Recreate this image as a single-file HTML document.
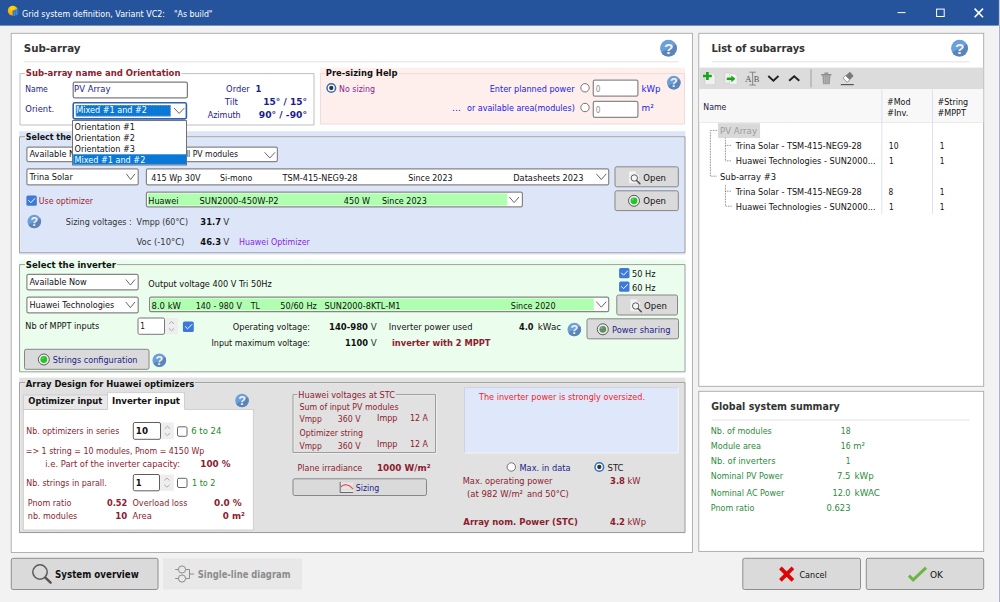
<!DOCTYPE html>
<html lang="en"><head><meta charset="utf-8"><title>Grid system definition, Variant VC2</title>
<style>
html,body{margin:0;padding:0;background:#f2f2f2;overflow:hidden}
body{width:1000px;height:602px}
svg{display:block;font-family:'DejaVu Sans','Liberation Sans',sans-serif}
text{white-space:pre}
</style></head><body>
<svg width="1000" height="602" viewBox="0 0 1000 602">
<rect x="0.00" y="0.00" width="1000.00" height="602.00" fill="#f2f2f2"/>
<rect x="0.00" y="0.00" width="999.00" height="25.60" fill="#25549c"/>
<rect x="998.90" y="0.00" width="1.10" height="602.00" fill="#c4c8d0"/>
<rect x="998.40" y="25.60" width="0.60" height="576.40" fill="#fafafa"/>
<rect x="999.00" y="25.60" width="0.60" height="576.40" fill="#94a4c4"/>
<defs><radialGradient id="sun" cx="0.45" cy="0.25" r="0.8"><stop offset="0" stop-color="#ffe000"/><stop offset="0.6" stop-color="#ffb400"/><stop offset="1" stop-color="#f08a00"/></radialGradient></defs>
<circle cx="12.8" cy="10.8" r="5.0" fill="url(#sun)"/>
<path d="M12.4,10.8 L18.6,8.6 V14.6 L12.9,16.3Z" fill="#2c72c2"/>
<path d="M14.3,10.2 V15.8 M16.3,9.5 V15.2" stroke="#6fb0ea" stroke-width="0.5"/>
<text x="22.00" y="16.50" fill="#fff" font-size="8.6" textLength="143.00" lengthAdjust="spacingAndGlyphs">Grid system definition, Variant VC2:</text>
<text x="174.00" y="16.50" fill="#fff" font-size="8.6" textLength="38.50" lengthAdjust="spacingAndGlyphs">"As build"</text>
<line x1="897.50" y1="12.60" x2="905.50" y2="12.60" stroke="#fff" stroke-width="1.0"/>
<rect x="936.60" y="9.10" width="7.60" height="7.40" fill="none" stroke="#fff" stroke-width="1.0"/>
<path d="M974.6,8.6 L983,17.3 M983,8.6 L974.6,17.3" stroke="#fff" stroke-width="1.6" fill="none"/>
<rect x="11.20" y="33.30" width="681.30" height="519.20" fill="#fff" stroke="#a9a9a9" stroke-width="0.9"/>
<text x="23.80" y="52.00" fill="#333" font-size="10.2" font-weight="bold" textLength="56.70" lengthAdjust="spacingAndGlyphs">Sub-array</text>
<line x1="24.00" y1="61.80" x2="678.80" y2="61.80" stroke="#e2e2e2" stroke-width="1.0"/>
<g><clipPath id="hc1"><circle cx="668.50" cy="48.20" r="8.40"/></clipPath><circle cx="668.50" cy="48.20" r="8.40" fill="#6b9fd9"/><path clip-path="url(#hc1)" d="M659.26,53.41 L677.74,42.99 V58.28 H659.26Z" fill="#5a85b8"/><text x="668.67" y="53.91" text-anchor="middle" font-size="15.54" font-weight="bold" font-family="'Liberation Sans',sans-serif" fill="#f1f1f1">?</text></g>
<path d="M25.00,73.60 H20.00 V125.00 H314.00 V73.60 H181.50" fill="none" stroke="#b4b4b4" stroke-width="0.85"/>
<text x="25.80" y="76.30" fill="#8c1c30" font-size="8.6" font-weight="bold" textLength="154.70" lengthAdjust="spacingAndGlyphs">Sub-array name and Orientation</text>
<text x="25.30" y="92.00" fill="#1c1c8c" font-size="8.6" textLength="22.50" lengthAdjust="spacingAndGlyphs">Name</text>
<rect x="73.20" y="82.20" width="114.20" height="15.70" fill="#fff" stroke="#7c7c7c" stroke-width="1.25" rx="1.6"/>
<text x="74.10" y="92.40" fill="#1c1c8c" font-size="8.6" textLength="36.40" lengthAdjust="spacingAndGlyphs">PV Array</text>
<text x="25.30" y="112.40" fill="#1c1c8c" font-size="8.6" textLength="28.80" lengthAdjust="spacingAndGlyphs">Orient.</text>
<text x="226.10" y="92.00" fill="#1c1c8c" font-size="8.6" textLength="23.60" lengthAdjust="spacingAndGlyphs">Order</text>
<text x="224.80" y="104.80" fill="#1c1c8c" font-size="8.6" textLength="13.20" lengthAdjust="spacingAndGlyphs">Tilt</text>
<text x="207.70" y="117.50" fill="#1c1c8c" font-size="8.6" textLength="33.00" lengthAdjust="spacingAndGlyphs">Azimuth</text>
<text x="255.57" y="92.00" fill="#1c1c8c" font-size="9.2" font-weight="bold" textLength="5.86" lengthAdjust="spacingAndGlyphs">1</text>
<text x="263.30" y="105.00" fill="#1c1c8c" font-size="9.2" font-weight="bold" textLength="43.70" lengthAdjust="spacingAndGlyphs">15° / 15°</text>
<text x="258.80" y="117.50" fill="#1c1c8c" font-size="9.2" font-weight="bold" textLength="48.20" lengthAdjust="spacingAndGlyphs">90° / -90°</text>
<rect x="320.00" y="67.60" width="365.00" height="56.70" fill="#feefed"/>
<path d="M325.00,73.60 H320.40 V124.00 H684.60 V73.60 H398.50" fill="none" stroke="#e6d9d9" stroke-width="0.85"/>
<text x="325.80" y="76.30" fill="#111" font-size="8.6" font-weight="bold" textLength="71.70" lengthAdjust="spacingAndGlyphs">Pre-sizing Help</text>
<circle cx="331.30" cy="88.00" r="4.30" fill="#fff" stroke="#2f6fb5" stroke-width="1.5"/>
<circle cx="331.30" cy="88.00" r="2.15" fill="#333"/>
<text x="339.10" y="92.00" fill="#8a1c8a" font-size="8.6" textLength="36.00" lengthAdjust="spacingAndGlyphs">No sizing</text>
<text x="489.70" y="92.00" fill="#2020f0" font-size="8.6" textLength="84.80" lengthAdjust="spacingAndGlyphs">Enter planned power</text>
<text x="452.10" y="111.20" fill="#2020f0" font-size="8.6" textLength="9.00" lengthAdjust="spacingAndGlyphs">...</text>
<text x="467.00" y="111.20" fill="#2020f0" font-size="8.6" textLength="107.80" lengthAdjust="spacingAndGlyphs">or available area(modules)</text>
<circle cx="585.00" cy="87.80" r="4.20" fill="#fff" stroke="#666" stroke-width="0.9"/>
<circle cx="585.00" cy="107.50" r="4.20" fill="#fff" stroke="#666" stroke-width="0.9"/>
<rect x="593.30" y="80.00" width="44.60" height="16.20" fill="#fff" stroke="#8a8a8a" stroke-width="1.25" rx="1.6"/>
<rect x="593.30" y="101.30" width="44.60" height="16.10" fill="#fff" stroke="#8a8a8a" stroke-width="1.25" rx="1.6"/>
<text x="595.75" y="91.80" fill="#8a8a8a" font-size="8.6" textLength="4.70" lengthAdjust="spacingAndGlyphs">0</text>
<text x="595.75" y="113.00" fill="#8a8a8a" font-size="8.6" textLength="4.70" lengthAdjust="spacingAndGlyphs">0</text>
<text x="641.50" y="92.00" fill="#2020f0" font-size="8.6" textLength="19.00" lengthAdjust="spacingAndGlyphs">kWp</text>
<text x="641.50" y="111.20" fill="#2020f0" font-size="8.6" textLength="12.20" lengthAdjust="spacingAndGlyphs">m²</text>
<g><clipPath id="hc2"><circle cx="673.80" cy="82.60" r="6.80"/></clipPath><circle cx="673.80" cy="82.60" r="6.80" fill="#6b9fd9"/><path clip-path="url(#hc2)" d="M666.32,86.82 L681.28,78.38 V90.76 H666.32Z" fill="#5a85b8"/><text x="673.94" y="87.22" text-anchor="middle" font-size="12.58" font-weight="bold" font-family="'Liberation Sans',sans-serif" fill="#f1f1f1">?</text></g>
<rect x="19.20" y="131.20" width="666.20" height="123.40" fill="#dde6f8"/>
<path d="M25.00,137.60 H20.40 V252.00 M19.60,253.60 H685.80 V136.80 M684.20,137.60 H130.00" fill="none" stroke="#fff" stroke-opacity="0.7" stroke-width="0.8"/>
<path d="M25.00,136.80 H19.60 V252.80 H685.00 V136.80 H130.00" fill="none" stroke="#8f8f8f" stroke-width="0.85"/>
<text x="25.80" y="140.00" fill="#111" font-size="8.6" font-weight="bold" textLength="96.20" lengthAdjust="spacingAndGlyphs">Select the PV module</text>
<rect x="26.90" y="147.10" width="111.30" height="14.60" fill="#fff" stroke="#858585" stroke-width="1.2" rx="1.6"/>
<text x="29.50" y="156.80" fill="#111" font-size="8.6" textLength="57.30" lengthAdjust="spacingAndGlyphs">Available Now</text>
<polyline points="125.80,152.50 130.40,158.00 135.00,152.50" fill="none" stroke="#555" stroke-width="0.9"/>
<rect x="146.40" y="147.10" width="131.00" height="14.60" fill="#fff" stroke="#858585" stroke-width="1.2" rx="1.6"/>
<text x="149.50" y="156.80" fill="#111" font-size="8.6" textLength="19.00" lengthAdjust="spacingAndGlyphs">Filter</text>
<text x="180.70" y="156.80" fill="#111" font-size="8.6" textLength="57.40" lengthAdjust="spacingAndGlyphs">All PV modules</text>
<polyline points="264.60,152.30 269.80,158.00 275.00,152.30" fill="none" stroke="#555" stroke-width="0.9"/>
<rect x="26.90" y="168.90" width="111.30" height="16.00" fill="#fff" stroke="#858585" stroke-width="1.2" rx="1.6"/>
<text x="29.50" y="180.00" fill="#111" font-size="8.6" textLength="43.30" lengthAdjust="spacingAndGlyphs">Trina Solar</text>
<polyline points="126.30,173.80 130.65,179.50 135.00,173.80" fill="none" stroke="#555" stroke-width="0.9"/>
<rect x="146.40" y="168.90" width="462.30" height="16.00" fill="#fff" stroke="#858585" stroke-width="1.2" rx="1.6"/>
<text x="151.30" y="180.60" fill="#111" font-size="8.6" textLength="49.20" lengthAdjust="spacingAndGlyphs">415 Wp 30V</text>
<text x="220.10" y="180.60" fill="#111" font-size="8.6" textLength="32.20" lengthAdjust="spacingAndGlyphs">Si-mono</text>
<text x="282.50" y="180.60" fill="#111" font-size="8.6" textLength="75.00" lengthAdjust="spacingAndGlyphs">TSM-415-NEG9-28</text>
<text x="408.30" y="180.60" fill="#111" font-size="8.6" textLength="44.20" lengthAdjust="spacingAndGlyphs">Since 2023</text>
<text x="513.30" y="180.60" fill="#111" font-size="8.6" textLength="70.20" lengthAdjust="spacingAndGlyphs">Datasheets 2023</text>
<polyline points="596.30,173.80 601.30,179.50 606.30,173.80" fill="none" stroke="#555" stroke-width="0.9"/>
<rect x="615.00" y="166.80" width="63.30" height="20.00" fill="#dadada" stroke="#868686" stroke-width="1.0" rx="1.8"/>
<g transform="translate(628.60,171.60)"><path d="M0,-0.6 H7.2 L10.4,2.6 V11.8 H0Z" fill="#f3f3f3" stroke="#d0d0d0" stroke-width="0.4"/><path d="M7.2,-0.6 V2.6 H10.4Z" fill="#d8d8d8"/><circle cx="5.7" cy="6.4" r="3.2" fill="#fff" fill-opacity="0.35" stroke="#4a4a4a" stroke-width="0.9"/><line x1="8" y1="8.9" x2="11.3" y2="12.2" stroke="#4a4a4a" stroke-width="1.5" stroke-linecap="round"/></g>
<text x="643.30" y="180.80" fill="#111" font-size="8.6" textLength="22.70" lengthAdjust="spacingAndGlyphs">Open</text>
<rect x="26.40" y="195.40" width="10.40" height="10.40" fill="#3c79d9" rx="1.6"/>
<polyline points="28.48,200.29 30.87,202.68 35.14,198.21" fill="none" stroke="#fff" stroke-width="1.0"/>
<text x="38.80" y="203.80" fill="#a01c30" font-size="8.6" textLength="54.20" lengthAdjust="spacingAndGlyphs">Use optimizer</text>
<rect x="146.40" y="192.10" width="376.00" height="14.80" fill="#fff" stroke="#858585" stroke-width="1.2" rx="1.6"/>
<rect x="147.90" y="193.40" width="359.30" height="12.20" fill="#b0ffb0"/>
<text x="148.30" y="203.80" fill="#111" font-size="8.6" textLength="30.20" lengthAdjust="spacingAndGlyphs">Huawei</text>
<text x="199.50" y="203.80" fill="#111" font-size="8.6" textLength="79.00" lengthAdjust="spacingAndGlyphs">SUN2000-450W-P2</text>
<text x="343.80" y="203.80" fill="#111" font-size="8.6" textLength="26.20" lengthAdjust="spacingAndGlyphs">450 W</text>
<text x="382.00" y="203.80" fill="#111" font-size="8.6" textLength="44.80" lengthAdjust="spacingAndGlyphs">Since 2023</text>
<polyline points="509.30,197.00 514.15,202.60 519.00,197.00" fill="none" stroke="#555" stroke-width="0.9"/>
<rect x="615.00" y="190.80" width="63.30" height="19.80" fill="#dadada" stroke="#868686" stroke-width="1.0" rx="1.8"/>
<circle cx="634.00" cy="200.80" r="5.50" fill="#ededed" stroke="#4a4a4a" stroke-width="0.9"/>
<circle cx="634.00" cy="200.80" r="3.41" fill="#25c425"/>
<circle cx="632.90" cy="199.43" r="1.10" fill="#fff" fill-opacity="0.25"/>
<text x="643.30" y="204.30" fill="#111" font-size="8.6" textLength="22.70" lengthAdjust="spacingAndGlyphs">Open</text>
<g><clipPath id="hc3"><circle cx="34.30" cy="221.50" r="6.80"/></clipPath><circle cx="34.30" cy="221.50" r="6.80" fill="#6b9fd9"/><path clip-path="url(#hc3)" d="M26.82,225.72 L41.78,217.28 V229.66 H26.82Z" fill="#5a85b8"/><text x="34.44" y="226.12" text-anchor="middle" font-size="12.58" font-weight="bold" font-family="'Liberation Sans',sans-serif" fill="#f1f1f1">?</text></g>
<text x="65.80" y="225.00" fill="#333" font-size="8.6" textLength="66.00" lengthAdjust="spacingAndGlyphs">Sizing voltages :</text>
<text x="136.50" y="225.00" fill="#333" font-size="8.6" textLength="51.50" lengthAdjust="spacingAndGlyphs">Vmpp (60°C)</text>
<text x="200.30" y="225.00" fill="#111" font-size="9.2" font-weight="bold" textLength="20.70" lengthAdjust="spacingAndGlyphs">31.7</text>
<text x="223.30" y="225.00" fill="#333" font-size="8.6" textLength="6.00" lengthAdjust="spacingAndGlyphs">V</text>
<text x="136.50" y="245.00" fill="#333" font-size="8.6" textLength="47.80" lengthAdjust="spacingAndGlyphs">Voc (-10°C)</text>
<text x="200.30" y="245.00" fill="#111" font-size="9.2" font-weight="bold" textLength="20.70" lengthAdjust="spacingAndGlyphs">46.3</text>
<text x="223.30" y="245.00" fill="#333" font-size="8.6" textLength="6.00" lengthAdjust="spacingAndGlyphs">V</text>
<text x="239.00" y="245.00" fill="#8c1ce6" font-size="8.6" textLength="70.80" lengthAdjust="spacingAndGlyphs">Huawei Optimizer</text>
<rect x="19.20" y="259.60" width="666.20" height="113.80" fill="#ebfded"/>
<path d="M25.00,265.40 H20.40 V371.00 M19.60,372.60 H685.80 V264.60 M684.20,265.40 H117.00" fill="none" stroke="#fff" stroke-opacity="0.7" stroke-width="0.8"/>
<path d="M25.00,264.60 H19.60 V371.80 H685.00 V264.60 H117.00" fill="none" stroke="#8f8f8f" stroke-width="0.85"/>
<text x="25.80" y="268.20" fill="#111" font-size="8.6" font-weight="bold" textLength="90.20" lengthAdjust="spacingAndGlyphs">Select the inverter</text>
<rect x="26.90" y="274.40" width="111.30" height="15.50" fill="#fff" stroke="#858585" stroke-width="1.2" rx="1.6"/>
<text x="29.50" y="285.00" fill="#111" font-size="8.6" textLength="57.30" lengthAdjust="spacingAndGlyphs">Available Now</text>
<polyline points="125.80,279.50 130.40,285.00 135.00,279.50" fill="none" stroke="#555" stroke-width="0.9"/>
<text x="148.30" y="286.80" fill="#111" font-size="8.6" textLength="123.50" lengthAdjust="spacingAndGlyphs">Output voltage 400 V Tri 50Hz</text>
<rect x="26.90" y="297.10" width="111.30" height="15.80" fill="#fff" stroke="#858585" stroke-width="1.2" rx="1.6"/>
<text x="29.50" y="308.00" fill="#111" font-size="8.6" textLength="84.80" lengthAdjust="spacingAndGlyphs">Huawei Technologies</text>
<polyline points="125.80,302.00 130.40,307.60 135.00,302.00" fill="none" stroke="#555" stroke-width="0.9"/>
<rect x="149.60" y="297.10" width="459.10" height="14.60" fill="#fff" stroke="#858585" stroke-width="1.2" rx="1.6"/>
<rect x="151.10" y="298.40" width="442.70" height="12.00" fill="#b0ffb0"/>
<text x="151.50" y="308.80" fill="#111" font-size="8.6" textLength="29.50" lengthAdjust="spacingAndGlyphs">8.0 kW</text>
<text x="195.80" y="308.80" fill="#111" font-size="8.6" textLength="46.00" lengthAdjust="spacingAndGlyphs">140 - 980 V</text>
<text x="250.80" y="308.80" fill="#111" font-size="8.6" textLength="9.20" lengthAdjust="spacingAndGlyphs">TL</text>
<text x="280.30" y="308.80" fill="#111" font-size="8.6" textLength="36.50" lengthAdjust="spacingAndGlyphs">50/60 Hz</text>
<text x="324.50" y="308.80" fill="#111" font-size="8.6" textLength="76.00" lengthAdjust="spacingAndGlyphs">SUN2000-8KTL-M1</text>
<text x="510.80" y="308.80" fill="#111" font-size="8.6" textLength="44.70" lengthAdjust="spacingAndGlyphs">Since 2020</text>
<polyline points="596.30,301.60 601.30,307.20 606.30,301.60" fill="none" stroke="#555" stroke-width="0.9"/>
<rect x="619.10" y="267.90" width="10.40" height="10.40" fill="#3c79d9" rx="1.6"/>
<polyline points="621.18,272.79 623.57,275.18 627.84,270.71" fill="none" stroke="#fff" stroke-width="1.0"/>
<rect x="619.10" y="281.40" width="10.40" height="10.40" fill="#3c79d9" rx="1.6"/>
<polyline points="621.18,286.29 623.57,288.68 627.84,284.21" fill="none" stroke="#fff" stroke-width="1.0"/>
<text x="632.00" y="276.80" fill="#111" font-size="8.6" textLength="23.50" lengthAdjust="spacingAndGlyphs">50 Hz</text>
<text x="632.00" y="290.50" fill="#111" font-size="8.6" textLength="23.50" lengthAdjust="spacingAndGlyphs">60 Hz</text>
<rect x="616.80" y="295.00" width="60.70" height="20.00" fill="#dadada" stroke="#868686" stroke-width="1.0" rx="1.8"/>
<g transform="translate(630.00,299.60)"><path d="M0,-0.6 H7.2 L10.4,2.6 V11.8 H0Z" fill="#f3f3f3" stroke="#d0d0d0" stroke-width="0.4"/><path d="M7.2,-0.6 V2.6 H10.4Z" fill="#d8d8d8"/><circle cx="5.7" cy="6.4" r="3.2" fill="#fff" fill-opacity="0.35" stroke="#4a4a4a" stroke-width="0.9"/><line x1="8" y1="8.9" x2="11.3" y2="12.2" stroke="#4a4a4a" stroke-width="1.5" stroke-linecap="round"/></g>
<text x="644.00" y="308.80" fill="#111" font-size="8.6" textLength="22.80" lengthAdjust="spacingAndGlyphs">Open</text>
<text x="25.30" y="328.80" fill="#111" font-size="8.6" textLength="74.00" lengthAdjust="spacingAndGlyphs">Nb of MPPT inputs</text>
<rect x="165.00" y="318.00" width="13.00" height="16.30" fill="#eeeeee"/>
<rect x="138.00" y="318.00" width="26.50" height="16.30" fill="#fff" stroke="#777" stroke-width="1.0" rx="1.5"/>
<polyline points="168.90,323.95 171.50,321.55 174.10,323.95" fill="none" stroke="#999" stroke-width="0.8"/>
<polyline points="168.90,328.35 171.50,330.75 174.10,328.35" fill="none" stroke="#999" stroke-width="0.8"/>
<text x="140.15" y="329.40" fill="#111" font-size="8.6" textLength="4.70" lengthAdjust="spacingAndGlyphs">1</text>
<rect x="182.90" y="321.40" width="10.90" height="10.60" fill="#3c79d9" rx="1.6"/>
<polyline points="185.08,326.38 187.59,328.82 192.06,324.26" fill="none" stroke="#fff" stroke-width="1.0"/>
<text x="232.80" y="329.50" fill="#111" font-size="8.6" textLength="77.20" lengthAdjust="spacingAndGlyphs">Operating voltage:</text>
<text x="211.50" y="346.30" fill="#111" font-size="8.6" textLength="98.50" lengthAdjust="spacingAndGlyphs">Input maximum voltage:</text>
<text x="329.00" y="329.50" fill="#111" font-size="9.2" font-weight="bold" textLength="39.00" lengthAdjust="spacingAndGlyphs">140-980</text>
<text x="370.80" y="329.50" fill="#333" font-size="8.6" textLength="6.00" lengthAdjust="spacingAndGlyphs">V</text>
<text x="345.00" y="346.30" fill="#111" font-size="9.2" font-weight="bold" textLength="23.00" lengthAdjust="spacingAndGlyphs">1100</text>
<text x="370.80" y="346.30" fill="#333" font-size="8.6" textLength="6.00" lengthAdjust="spacingAndGlyphs">V</text>
<text x="388.80" y="329.50" fill="#111" font-size="8.6" textLength="83.70" lengthAdjust="spacingAndGlyphs">Inverter power used</text>
<text x="392.00" y="346.30" fill="#8c1c30" font-size="9.2" font-weight="bold" textLength="98.50" lengthAdjust="spacingAndGlyphs">inverter with 2 MPPT</text>
<text x="519.00" y="329.50" fill="#111" font-size="9.2" font-weight="bold" textLength="14.50" lengthAdjust="spacingAndGlyphs">4.0</text>
<text x="537.80" y="329.50" fill="#111" font-size="8.6" textLength="23.20" lengthAdjust="spacingAndGlyphs">kWac</text>
<g><clipPath id="hc4"><circle cx="574.30" cy="329.50" r="6.80"/></clipPath><circle cx="574.30" cy="329.50" r="6.80" fill="#6b9fd9"/><path clip-path="url(#hc4)" d="M566.82,333.72 L581.78,325.28 V337.66 H566.82Z" fill="#5a85b8"/><text x="574.44" y="334.12" text-anchor="middle" font-size="12.58" font-weight="bold" font-family="'Liberation Sans',sans-serif" fill="#f1f1f1">?</text></g>
<rect x="587.00" y="318.80" width="91.50" height="20.00" fill="#dadada" stroke="#868686" stroke-width="1.0" rx="1.8"/>
<circle cx="602.80" cy="329.30" r="5.50" fill="#ededed" stroke="#4a4a4a" stroke-width="0.9"/>
<circle cx="602.80" cy="329.30" r="3.41" fill="#5f8f5f"/>
<circle cx="601.70" cy="327.93" r="1.10" fill="#fff" fill-opacity="0.25"/>
<text x="612.00" y="332.50" fill="#1c1c8c" font-size="8.6" textLength="58.50" lengthAdjust="spacingAndGlyphs">Power sharing</text>
<rect x="24.50" y="349.30" width="124.50" height="20.00" fill="#dadada" stroke="#868686" stroke-width="1.0" rx="1.8"/>
<circle cx="43.80" cy="359.50" r="5.50" fill="#ededed" stroke="#4a4a4a" stroke-width="0.9"/>
<circle cx="43.80" cy="359.50" r="3.41" fill="#25c425"/>
<circle cx="42.70" cy="358.12" r="1.10" fill="#fff" fill-opacity="0.25"/>
<text x="52.80" y="362.50" fill="#1c1c8c" font-size="8.6" textLength="84.70" lengthAdjust="spacingAndGlyphs">Strings configuration</text>
<g><clipPath id="hc5"><circle cx="159.30" cy="360.30" r="6.80"/></clipPath><circle cx="159.30" cy="360.30" r="6.80" fill="#6b9fd9"/><path clip-path="url(#hc5)" d="M151.82,364.52 L166.78,356.08 V368.46 H151.82Z" fill="#5a85b8"/><text x="159.44" y="364.92" text-anchor="middle" font-size="12.58" font-weight="bold" font-family="'Liberation Sans',sans-serif" fill="#f1f1f1">?</text></g>
<rect x="19.20" y="377.60" width="666.20" height="155.80" fill="#e1e1e1"/>
<path d="M25.00,383.40 H20.40 V531.70 M19.60,533.30 H685.80 V382.60 M684.20,383.40 H195.00" fill="none" stroke="#fff" stroke-opacity="0.7" stroke-width="0.8"/>
<path d="M25.00,382.60 H19.60 V532.50 H685.00 V382.60 H195.00" fill="none" stroke="#8f8f8f" stroke-width="0.85"/>
<text x="25.80" y="386.80" fill="#111" font-size="8.6" font-weight="bold" textLength="168.50" lengthAdjust="spacingAndGlyphs">Array Design for Huawei optimizers</text>
<rect x="23.30" y="409.40" width="230.00" height="120.60" fill="#fff" stroke="#c8c8c8" stroke-width="0.8"/>
<rect x="23.30" y="395.00" width="84.20" height="14.40" fill="#e9e9e9" stroke="#c8c8c8" stroke-width="0.8"/>
<rect x="107.50" y="392.60" width="77.00" height="17.60" fill="#fff"/>
<path d="M107.5,409.4 V392.6 H184.5 V409.4" fill="none" stroke="#c8c8c8" stroke-width="0.8"/>
<text x="28.30" y="404.30" fill="#111" font-size="9.2" font-weight="bold" textLength="74.00" lengthAdjust="spacingAndGlyphs">Optimizer input</text>
<text x="112.00" y="403.80" fill="#111" font-size="9.2" font-weight="bold" textLength="68.00" lengthAdjust="spacingAndGlyphs">Inverter input</text>
<g><clipPath id="hc6"><circle cx="242.00" cy="400.50" r="6.80"/></clipPath><circle cx="242.00" cy="400.50" r="6.80" fill="#6b9fd9"/><path clip-path="url(#hc6)" d="M234.52,404.72 L249.48,396.28 V408.66 H234.52Z" fill="#5a85b8"/><text x="242.14" y="405.12" text-anchor="middle" font-size="12.58" font-weight="bold" font-family="'Liberation Sans',sans-serif" fill="#f1f1f1">?</text></g>
<text x="26.30" y="434.30" fill="#8c1c30" font-size="8.6" textLength="93.00" lengthAdjust="spacingAndGlyphs">Nb. optimizers in series</text>
<rect x="161.00" y="422.50" width="12.80" height="16.80" fill="#eeeeee"/>
<rect x="133.30" y="422.50" width="27.20" height="16.80" fill="#fff" stroke="#5e5e5e" stroke-width="1.0" rx="1.5"/>
<polyline points="164.80,428.70 167.40,426.30 170.00,428.70" fill="none" stroke="#999" stroke-width="0.8"/>
<polyline points="164.80,433.10 167.40,435.50 170.00,433.10" fill="none" stroke="#999" stroke-width="0.8"/>
<text x="135.80" y="433.80" fill="#111" font-size="9.2" font-weight="bold" textLength="12.20" lengthAdjust="spacingAndGlyphs">10</text>
<rect x="177.50" y="426.80" width="9.50" height="9.50" fill="#fff" stroke="#555" stroke-width="0.9" rx="1.5"/>
<text x="191.30" y="434.30" fill="#228b22" font-size="8.6" textLength="30.00" lengthAdjust="spacingAndGlyphs">6 to 24</text>
<text x="25.80" y="454.30" fill="#8c1c30" font-size="8.6" textLength="178.50" lengthAdjust="spacingAndGlyphs">=&gt; 1 string = 10 modules, Pnom = 4150 Wp</text>
<text x="45.30" y="466.80" fill="#8c1c30" font-size="8.6" textLength="134.70" lengthAdjust="spacingAndGlyphs">i.e. Part of the inverter capacity:</text>
<text x="200.30" y="466.80" fill="#8c1c30" font-size="9.2" font-weight="bold" textLength="30.20" lengthAdjust="spacingAndGlyphs">100 %</text>
<text x="26.30" y="485.80" fill="#8c1c30" font-size="8.6" textLength="80.50" lengthAdjust="spacingAndGlyphs">Nb. strings in parall.</text>
<rect x="160.00" y="474.50" width="13.80" height="16.30" fill="#eeeeee"/>
<rect x="133.30" y="474.50" width="26.20" height="16.30" fill="#fff" stroke="#5e5e5e" stroke-width="1.0" rx="1.5"/>
<polyline points="164.30,480.45 166.90,478.05 169.50,480.45" fill="none" stroke="#999" stroke-width="0.8"/>
<polyline points="164.30,484.85 166.90,487.25 169.50,484.85" fill="none" stroke="#999" stroke-width="0.8"/>
<text x="135.67" y="485.80" fill="#111" font-size="9.2" font-weight="bold" textLength="5.86" lengthAdjust="spacingAndGlyphs">1</text>
<rect x="177.50" y="478.30" width="9.50" height="9.20" fill="#fff" stroke="#555" stroke-width="0.9" rx="1.5"/>
<text x="192.00" y="485.80" fill="#228b22" font-size="8.6" textLength="23.50" lengthAdjust="spacingAndGlyphs">1 to 2</text>
<text x="27.80" y="505.50" fill="#8c1c30" font-size="8.6" textLength="43.50" lengthAdjust="spacingAndGlyphs">Pnom ratio</text>
<text x="107.00" y="505.50" fill="#8c1c30" font-size="9.2" font-weight="bold" textLength="20.30" lengthAdjust="spacingAndGlyphs">0.52</text>
<text x="132.50" y="505.50" fill="#8c1c30" font-size="8.6" textLength="55.00" lengthAdjust="spacingAndGlyphs">Overload loss</text>
<text x="214.00" y="505.50" fill="#8c1c30" font-size="9.2" font-weight="bold" textLength="27.80" lengthAdjust="spacingAndGlyphs">0.0 %</text>
<text x="27.80" y="518.80" fill="#8c1c30" font-size="8.6" textLength="49.50" lengthAdjust="spacingAndGlyphs">nb. modules</text>
<text x="115.30" y="518.80" fill="#8c1c30" font-size="9.2" font-weight="bold" textLength="12.00" lengthAdjust="spacingAndGlyphs">10</text>
<text x="132.50" y="518.80" fill="#8c1c30" font-size="8.6" textLength="19.30" lengthAdjust="spacingAndGlyphs">Area</text>
<text x="222.80" y="518.80" fill="#8c1c30" font-size="9.2" font-weight="bold" textLength="22.00" lengthAdjust="spacingAndGlyphs">0 m²</text>
<path d="M297.50,395.40 H293.80 V451.70 M293.00,453.30 H436.30 V394.60 M434.70,395.40 H396.00" fill="none" stroke="#fff" stroke-opacity="0.7" stroke-width="0.8"/>
<path d="M297.50,394.60 H293.00 V452.50 H435.50 V394.60 H396.00" fill="none" stroke="#8f8f8f" stroke-width="0.85"/>
<text x="298.30" y="397.50" fill="#8c1c30" font-size="8.6" textLength="96.70" lengthAdjust="spacingAndGlyphs">Huawei voltages at STC</text>
<text x="299.50" y="409.50" fill="#8c1c30" font-size="8.6" textLength="99.00" lengthAdjust="spacingAndGlyphs">Sum of input PV modules</text>
<text x="299.50" y="421.80" fill="#8c1c30" font-size="8.6" textLength="22.30" lengthAdjust="spacingAndGlyphs">Vmpp</text>
<text x="337.80" y="421.80" fill="#8c1c30" font-size="8.6" textLength="22.70" lengthAdjust="spacingAndGlyphs">360 V</text>
<text x="377.00" y="421.40" fill="#8c1c30" font-size="8.6" textLength="20.50" lengthAdjust="spacingAndGlyphs">Impp</text>
<text x="410.00" y="421.40" fill="#8c1c30" font-size="8.6" textLength="18.00" lengthAdjust="spacingAndGlyphs">12 A</text>
<text x="299.50" y="436.30" fill="#8c1c30" font-size="8.6" textLength="63.50" lengthAdjust="spacingAndGlyphs">Optimizer string</text>
<text x="299.50" y="448.80" fill="#8c1c30" font-size="8.6" textLength="22.30" lengthAdjust="spacingAndGlyphs">Vmpp</text>
<text x="337.80" y="448.80" fill="#8c1c30" font-size="8.6" textLength="22.70" lengthAdjust="spacingAndGlyphs">360 V</text>
<text x="377.00" y="447.20" fill="#8c1c30" font-size="8.6" textLength="20.50" lengthAdjust="spacingAndGlyphs">Impp</text>
<text x="410.00" y="447.20" fill="#8c1c30" font-size="8.6" textLength="18.00" lengthAdjust="spacingAndGlyphs">12 A</text>
<text x="297.50" y="470.50" fill="#8c1c30" font-size="8.6" textLength="64.80" lengthAdjust="spacingAndGlyphs">Plane irradiance</text>
<text x="377.00" y="470.50" fill="#8c1c30" font-size="9.2" font-weight="bold" textLength="53.50" lengthAdjust="spacingAndGlyphs">1000 W/m²</text>
<rect x="293.00" y="478.80" width="133.50" height="16.70" fill="#dadada" stroke="#868686" stroke-width="1.0" rx="1.8"/>
<g><rect x="340.2" y="482" width="12.9" height="10.5" fill="#e6e6e6"/><path d="M340.2,482 H353.1 M340.2,486 H353.1 M340.2,489.6 H353.1" stroke="#cfcfcf" stroke-width="0.5"/><path d="M340.2,482 V492.5 H353.1" fill="none" stroke="#4a4a4a" stroke-width="0.8"/><path d="M340.5,487.1 Q346.4,481.4 353,488.9" fill="none" stroke="#e84c4c" stroke-width="1.1"/></g>
<text x="355.80" y="491.30" fill="#1c1c8c" font-size="8.6" textLength="23.50" lengthAdjust="spacingAndGlyphs">Sizing</text>
<rect x="464.50" y="387.60" width="213.80" height="65.40" fill="#dfe8fb"/>
<path d="M464.5,453 V387.6 H678.3" fill="none" stroke="#c9cedb" stroke-width="0.8"/>
<path d="M464.5,453 H678.3 V387.6" fill="none" stroke="#f8f8f8" stroke-width="0.8"/>
<text x="479.00" y="399.50" fill="#ee1c28" font-size="8.6" textLength="166.00" lengthAdjust="spacingAndGlyphs">The inverter power is strongly oversized.</text>
<circle cx="511.30" cy="467.00" r="4.20" fill="#fff" stroke="#666" stroke-width="0.9"/>
<text x="519.50" y="470.50" fill="#1c1c8c" font-size="8.6" textLength="51.00" lengthAdjust="spacingAndGlyphs">Max. in data</text>
<circle cx="599.30" cy="467.00" r="4.30" fill="#fff" stroke="#2f6fb5" stroke-width="1.5"/>
<circle cx="599.30" cy="467.00" r="2.15" fill="#333"/>
<text x="607.50" y="470.50" fill="#222" font-size="8.6" textLength="16.00" lengthAdjust="spacingAndGlyphs">STC</text>
<text x="462.80" y="483.80" fill="#8c1c30" font-size="8.6" textLength="89.70" lengthAdjust="spacingAndGlyphs">Max. operating power</text>
<text x="610.00" y="483.80" fill="#8c1c30" font-size="9.2" font-weight="bold" textLength="15.00" lengthAdjust="spacingAndGlyphs">3.8</text>
<text x="627.50" y="483.80" fill="#8c1c30" font-size="8.6" textLength="13.00" lengthAdjust="spacingAndGlyphs">kW</text>
<text x="467.00" y="497.00" fill="#8c1c30" font-size="8.6" textLength="56.00" lengthAdjust="spacingAndGlyphs">(at 982 W/m²</text>
<text x="527.00" y="497.00" fill="#8c1c30" font-size="8.6" textLength="41.80" lengthAdjust="spacingAndGlyphs">and 50°C)</text>
<text x="463.30" y="525.00" fill="#8c1c30" font-size="9.2" font-weight="bold" textLength="114.70" lengthAdjust="spacingAndGlyphs">Array nom. Power (STC)</text>
<text x="610.00" y="525.00" fill="#8c1c30" font-size="9.2" font-weight="bold" textLength="15.00" lengthAdjust="spacingAndGlyphs">4.2</text>
<text x="627.50" y="525.00" fill="#8c1c30" font-size="8.6" textLength="18.50" lengthAdjust="spacingAndGlyphs">kWp</text>
<rect x="11.30" y="558.30" width="146.70" height="31.20" fill="#dadada" stroke="#8e8e8e" stroke-width="1.0" rx="1.8"/>
<g><circle cx="40" cy="572" r="7.2" fill="none" stroke="#5a5a5a" stroke-width="1.5"/><line x1="45.6" y1="577.8" x2="50.6" y2="582.6" stroke="#555" stroke-width="2.5" stroke-linecap="round"/></g>
<text x="55.00" y="577.80" fill="#111" font-size="9.6" font-weight="bold" textLength="83.80" lengthAdjust="spacingAndGlyphs">System overview</text>
<rect x="163.00" y="558.30" width="139.00" height="31.20" fill="#e8e8e8"/>
<g fill="none" stroke="#8c8c8c" stroke-width="1.0"><circle cx="182" cy="569.5" r="3.6"/><circle cx="182" cy="578.5" r="3.6"/><path d="M175.2,569.5 H178.4 M175.2,578.5 H178.4 M185.6,569.5 H189.5 V578.5 H185.6 M189.5,574 H194"/></g>
<text x="197.80" y="577.80" fill="#8c8c8c" font-size="9.6" font-weight="bold" textLength="92.70" lengthAdjust="spacingAndGlyphs">Single-line diagram</text>
<rect x="698.80" y="33.30" width="284.90" height="353.00" fill="#fff" stroke="#a9a9a9" stroke-width="0.9"/>
<text x="711.50" y="52.00" fill="#333" font-size="10.2" font-weight="bold" textLength="93.50" lengthAdjust="spacingAndGlyphs">List of subarrays</text>
<line x1="712.00" y1="61.80" x2="969.50" y2="61.80" stroke="#e2e2e2" stroke-width="1.0"/>
<g><clipPath id="hc7"><circle cx="959.50" cy="48.20" r="8.40"/></clipPath><circle cx="959.50" cy="48.20" r="8.40" fill="#6b9fd9"/><path clip-path="url(#hc7)" d="M950.26,53.41 L968.74,42.99 V58.28 H950.26Z" fill="#5a85b8"/><text x="959.67" y="53.91" text-anchor="middle" font-size="15.54" font-weight="bold" font-family="'Liberation Sans',sans-serif" fill="#f1f1f1">?</text></g>
<rect x="699.30" y="67.60" width="284.00" height="21.70" fill="#dcdcdc"/>
<g><path d="M704.8,72.8 H712.2 L715.2,75.8 V84.8 H704.8Z" fill="#f0f0f0" stroke="#c4c4c4" stroke-width="0.5"/><path d="M707.4,71.9 V80.1 M703,76 H711.8" stroke="#18a518" stroke-width="2.7"/></g>
<g><path d="M724.8,72.8 H730 L732.4,75.2 V83.2 H724.8Z" fill="#f0f0f0" stroke="#c4c4c4" stroke-width="0.5"/><path d="M729.6,73.6 H734.4 L737.2,76.4 V84.4 H729.6Z" fill="#f4f4f4" stroke="#c4c4c4" stroke-width="0.5"/><path d="M726.8,78.8 H732.2" stroke="#18a518" stroke-width="2.5"/><path d="M731.4,75.4 L735.4,78.8 L731.4,82.2Z" fill="#18a518"/></g>
<text x="745" y="81.7" font-family="'Liberation Serif','DejaVu Serif',serif" font-size="9.2" fill="#555" textLength="6.6" lengthAdjust="spacingAndGlyphs">A</text>
<text x="753.7" y="81.7" font-family="'Liberation Serif','DejaVu Serif',serif" font-size="9.2" fill="#555" textLength="5.6" lengthAdjust="spacingAndGlyphs">B</text>
<path d="M752.6,72.2 V85 M749.4,72.2 H755.8 M749.4,85 H755.8" stroke="#666" stroke-width="0.7" fill="none"/>
<polyline points="768.3,76 773.4,80.6 778.5,76" fill="none" stroke="#222" stroke-width="1.9"/>
<polyline points="789.1,80.8 794.2,76.2 799.3,80.8" fill="none" stroke="#222" stroke-width="1.9"/>
<line x1="811.00" y1="69.20" x2="811.00" y2="87.60" stroke="#a6a6a6" stroke-width="1.1"/>
<g><rect x="821.2" y="74" width="10.2" height="1.6" fill="#8a8a8a"/><rect x="824.4" y="72.4" width="4" height="1.8" fill="#9a9a9a"/><path d="M822.4,75.6 H830.4 L829.8,84.2 H823Z" fill="#9a9a9a"/><path d="M824.6,76.4 V83.4 M826.4,76.4 V83.4 M828.2,76.4 V83.4" stroke="#c4c4c4" stroke-width="0.6"/></g>
<g><path d="M850,71.8 L853.6,76 L847.2,82.4 L842.8,78Z" fill="#7a7a7a"/><path d="M845.5,75.5 L849.7,79.8 L847.2,82.3 L842.9,78Z" fill="#fff" stroke="#7a7a7a" stroke-width="0.6"/><path d="M840.8,84.6 H853.8" stroke="#555" stroke-width="1.2"/></g>
<rect x="699.30" y="89.30" width="284.00" height="33.20" fill="#f8f8f8"/>
<line x1="699.30" y1="122.50" x2="983.30" y2="122.50" stroke="#e6e6e6" stroke-width="0.8"/>
<text x="703.30" y="110.00" fill="#1a1a40" font-size="8.6" textLength="23.00" lengthAdjust="spacingAndGlyphs">Name</text>
<text x="887.00" y="104.50" fill="#111" font-size="8.6" textLength="23.50" lengthAdjust="spacingAndGlyphs">#Mod</text>
<text x="887.00" y="115.80" fill="#111" font-size="8.6" textLength="21.50" lengthAdjust="spacingAndGlyphs">#Inv.</text>
<text x="937.50" y="104.50" fill="#111" font-size="8.6" textLength="30.60" lengthAdjust="spacingAndGlyphs">#String</text>
<text x="937.50" y="115.80" fill="#111" font-size="8.6" textLength="28.40" lengthAdjust="spacingAndGlyphs">#MPPT</text>
<line x1="881.80" y1="89.30" x2="881.80" y2="214.30" stroke="#d3dbee" stroke-width="0.8"/>
<line x1="932.50" y1="89.30" x2="932.50" y2="214.30" stroke="#d3dbee" stroke-width="0.8"/>
<rect x="718.00" y="123.20" width="42.00" height="14.80" fill="#d9d9d9"/>
<text x="720.00" y="133.80" fill="#9c9c9c" font-size="8.6" textLength="37.00" lengthAdjust="spacingAndGlyphs">PV Array</text>
<path d="M717,130.4 H710.4 V176.2 H716.8" fill="none" stroke="#5a5a5a" stroke-width="0.8" stroke-dasharray="0.8,0.8"/>
<path d="M725.4,138.4 V160.8 H731.8 M725.4,145.4 H731.8" fill="none" stroke="#5a5a5a" stroke-width="0.8" stroke-dasharray="0.8,0.8"/>
<path d="M725.4,184.8 V206.2 H731.8 M725.4,191.2 H731.8" fill="none" stroke="#5a5a5a" stroke-width="0.8" stroke-dasharray="0.8,0.8"/>
<text x="735.80" y="149.00" fill="#111" font-size="8.6" textLength="126.00" lengthAdjust="spacingAndGlyphs">Trina Solar - TSM-415-NEG9-28</text>
<text x="735.80" y="164.30" fill="#111" font-size="8.6" textLength="139.70" lengthAdjust="spacingAndGlyphs">Huawei Technologies - SUN2000...</text>
<text x="720.00" y="179.60" fill="#111" font-size="8.6" textLength="56.00" lengthAdjust="spacingAndGlyphs">Sub-array #3</text>
<text x="735.80" y="194.90" fill="#111" font-size="8.6" textLength="126.00" lengthAdjust="spacingAndGlyphs">Trina Solar - TSM-415-NEG9-28</text>
<text x="735.80" y="210.20" fill="#111" font-size="8.6" textLength="139.70" lengthAdjust="spacingAndGlyphs">Huawei Technologies - SUN2000...</text>
<text x="888.80" y="149.00" fill="#111" font-size="8.6" textLength="9.70" lengthAdjust="spacingAndGlyphs">10</text>
<text x="888.95" y="164.30" fill="#111" font-size="8.6" textLength="4.70" lengthAdjust="spacingAndGlyphs">1</text>
<text x="888.45" y="194.90" fill="#111" font-size="8.6" textLength="4.70" lengthAdjust="spacingAndGlyphs">8</text>
<text x="888.95" y="210.20" fill="#111" font-size="8.6" textLength="4.70" lengthAdjust="spacingAndGlyphs">1</text>
<text x="939.65" y="149.00" fill="#111" font-size="8.6" textLength="4.70" lengthAdjust="spacingAndGlyphs">1</text>
<text x="939.65" y="164.30" fill="#111" font-size="8.6" textLength="4.70" lengthAdjust="spacingAndGlyphs">1</text>
<text x="939.65" y="194.90" fill="#111" font-size="8.6" textLength="4.70" lengthAdjust="spacingAndGlyphs">1</text>
<text x="939.65" y="210.20" fill="#111" font-size="8.6" textLength="4.70" lengthAdjust="spacingAndGlyphs">1</text>
<rect x="698.80" y="391.30" width="284.90" height="160.10" fill="#fff" stroke="#a9a9a9" stroke-width="0.9"/>
<text x="711.30" y="410.00" fill="#333" font-size="10.2" font-weight="bold" textLength="128.50" lengthAdjust="spacingAndGlyphs">Global system summary</text>
<line x1="711.80" y1="420.00" x2="969.50" y2="420.00" stroke="#e2e2e2" stroke-width="1.0"/>
<text x="710.80" y="433.80" fill="#2c8a3c" font-size="8.6" textLength="61.00" lengthAdjust="spacingAndGlyphs">Nb. of modules</text>
<text x="840.80" y="433.80" fill="#2c8a3c" font-size="8.6" textLength="9.70" lengthAdjust="spacingAndGlyphs">18</text>
<text x="710.80" y="448.80" fill="#2c8a3c" font-size="8.6" textLength="50.20" lengthAdjust="spacingAndGlyphs">Module area</text>
<text x="840.80" y="448.80" fill="#2c8a3c" font-size="8.6" textLength="9.70" lengthAdjust="spacingAndGlyphs">16</text>
<text x="853.30" y="448.80" fill="#2c8a3c" font-size="8.6" textLength="11.70" lengthAdjust="spacingAndGlyphs">m²</text>
<text x="710.80" y="463.80" fill="#2c8a3c" font-size="8.6" textLength="64.70" lengthAdjust="spacingAndGlyphs">Nb. of inverters</text>
<text x="845.75" y="463.80" fill="#2c8a3c" font-size="8.6" textLength="4.70" lengthAdjust="spacingAndGlyphs">1</text>
<text x="710.80" y="479.30" fill="#2c8a3c" font-size="8.6" textLength="72.20" lengthAdjust="spacingAndGlyphs">Nominal PV Power</text>
<text x="837.00" y="479.30" fill="#2c8a3c" font-size="8.6" textLength="13.50" lengthAdjust="spacingAndGlyphs">7.5</text>
<text x="854.50" y="479.30" fill="#2c8a3c" font-size="8.6" textLength="19.30" lengthAdjust="spacingAndGlyphs">kWp</text>
<text x="710.80" y="495.80" fill="#2c8a3c" font-size="8.6" textLength="73.50" lengthAdjust="spacingAndGlyphs">Nominal AC Power</text>
<text x="832.50" y="495.80" fill="#2c8a3c" font-size="8.6" textLength="18.00" lengthAdjust="spacingAndGlyphs">12.0</text>
<text x="854.50" y="495.80" fill="#2c8a3c" font-size="8.6" textLength="25.50" lengthAdjust="spacingAndGlyphs">kWAC</text>
<text x="710.80" y="511.30" fill="#2c8a3c" font-size="8.6" textLength="43.50" lengthAdjust="spacingAndGlyphs">Pnom ratio</text>
<text x="826.50" y="511.30" fill="#2c8a3c" font-size="8.6" textLength="24.00" lengthAdjust="spacingAndGlyphs">0.623</text>
<rect x="742.80" y="558.30" width="117.70" height="31.20" fill="#dadada" stroke="#8e8e8e" stroke-width="1.0" rx="1.8"/>
<path d="M780.4,567.9 L792.9,580.4 M792.9,567.9 L780.4,580.4" stroke="#df0505" stroke-width="3.8" fill="none"/>
<text x="799.50" y="578.30" fill="#111" font-size="8.6" textLength="27.30" lengthAdjust="spacingAndGlyphs">Cancel</text>
<rect x="866.30" y="558.30" width="117.40" height="31.20" fill="#dadada" stroke="#8e8e8e" stroke-width="1.0" rx="1.8"/>
<path d="M908.9,575.6 L913.2,579.9 L926.1,567.6" stroke="#70b445" stroke-width="3.0" fill="none"/>
<text x="930.00" y="578.30" fill="#111" font-size="8.6" textLength="13.00" lengthAdjust="spacingAndGlyphs">OK</text>
<rect x="73.20" y="102.80" width="113.20" height="16.10" fill="#fff" stroke="#2f62b5" stroke-width="1.6" rx="1.6"/>
<rect x="75.80" y="105.00" width="95.00" height="11.50" fill="#0a78d7"/>
<rect x="76.1" y="105.3" width="94.4" height="10.9" fill="none" stroke="#f0c890" stroke-width="0.7" stroke-dasharray="0.8,0.8"/>
<text x="76.30" y="113.20" fill="#fff" font-size="8.6" textLength="70.70" lengthAdjust="spacingAndGlyphs">Mixed #1 and #2</text>
<polyline points="174.00,108.00 179.20,113.40 184.40,108.00" fill="none" stroke="#555" stroke-width="0.9"/>
<rect x="72.60" y="120.60" width="113.90" height="44.40" fill="#fff" stroke="#5a5a5a" stroke-width="0.85"/>
<text x="74.50" y="129.60" fill="#111" font-size="8.6" textLength="60.50" lengthAdjust="spacingAndGlyphs">Orientation #1</text>
<text x="74.50" y="140.80" fill="#111" font-size="8.6" textLength="60.50" lengthAdjust="spacingAndGlyphs">Orientation #2</text>
<text x="74.50" y="151.80" fill="#111" font-size="8.6" textLength="60.50" lengthAdjust="spacingAndGlyphs">Orientation #3</text>
<rect x="73.20" y="154.30" width="113.00" height="10.20" fill="#0a78d7"/>
<text x="74.50" y="162.50" fill="#fff" font-size="8.6" textLength="70.80" lengthAdjust="spacingAndGlyphs">Mixed #1 and #2</text>
</svg>
</body></html>
